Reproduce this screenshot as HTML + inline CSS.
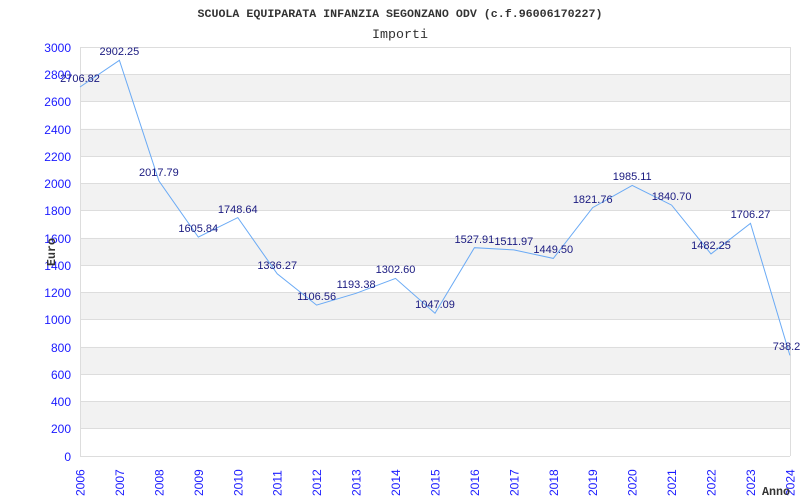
<!DOCTYPE html>
<html><head><meta charset="utf-8"><style>html,body{margin:0;padding:0;background:#fff;width:800px;height:500px;overflow:hidden}</style></head>
<body>
<svg width="800" height="500" xmlns="http://www.w3.org/2000/svg" font-family="Liberation Sans, sans-serif">
<rect width="800" height="500" fill="#fff"/>
<g fill="#f2f2f2">
<rect x="80" y="74.3" width="710" height="27.3"/>
<rect x="80" y="128.8" width="710" height="27.3"/>
<rect x="80" y="183.4" width="710" height="27.3"/>
<rect x="80" y="237.9" width="710" height="27.3"/>
<rect x="80" y="292.4" width="710" height="27.3"/>
<rect x="80" y="346.9" width="710" height="27.3"/>
<rect x="80" y="401.5" width="710" height="27.3"/>
</g>
<g stroke="#dddddd" stroke-width="1">
<line x1="80" x2="790" y1="47.5" y2="47.5"/><line x1="80" x2="790" y1="74.5" y2="74.5"/><line x1="80" x2="790" y1="101.5" y2="101.5"/><line x1="80" x2="790" y1="129.5" y2="129.5"/><line x1="80" x2="790" y1="156.5" y2="156.5"/><line x1="80" x2="790" y1="183.5" y2="183.5"/><line x1="80" x2="790" y1="210.5" y2="210.5"/><line x1="80" x2="790" y1="238.5" y2="238.5"/><line x1="80" x2="790" y1="265.5" y2="265.5"/><line x1="80" x2="790" y1="292.5" y2="292.5"/><line x1="80" x2="790" y1="319.5" y2="319.5"/><line x1="80" x2="790" y1="347.5" y2="347.5"/><line x1="80" x2="790" y1="374.5" y2="374.5"/><line x1="80" x2="790" y1="401.5" y2="401.5"/><line x1="80" x2="790" y1="428.5" y2="428.5"/><line x1="80" x2="790" y1="456.5" y2="456.5"/>
<line x1="80.5" x2="80.5" y1="47" y2="456"/><line x1="790.5" x2="790.5" y1="47" y2="456"/>
</g>
<g font-size="12" fill="#1a1aff" text-anchor="end">
<text x="71" y="52">3000</text><text x="71" y="79">2800</text><text x="71" y="106">2600</text><text x="71" y="134">2400</text><text x="71" y="161">2200</text><text x="71" y="188">2000</text><text x="71" y="215">1800</text><text x="71" y="243">1600</text><text x="71" y="270">1400</text><text x="71" y="297">1200</text><text x="71" y="324">1000</text><text x="71" y="352">800</text><text x="71" y="379">600</text><text x="71" y="406">400</text><text x="71" y="433">200</text><text x="71" y="461">0</text>
</g>
<g font-size="12" fill="#1a1aff">
<text transform="translate(84.5,496) rotate(-90)">2006</text>
<text transform="translate(123.9,496) rotate(-90)">2007</text>
<text transform="translate(163.4,496) rotate(-90)">2008</text>
<text transform="translate(202.8,496) rotate(-90)">2009</text>
<text transform="translate(242.3,496) rotate(-90)">2010</text>
<text transform="translate(281.7,496) rotate(-90)">2011</text>
<text transform="translate(321.1,496) rotate(-90)">2012</text>
<text transform="translate(360.6,496) rotate(-90)">2013</text>
<text transform="translate(400,496) rotate(-90)">2014</text>
<text transform="translate(439.5,496) rotate(-90)">2015</text>
<text transform="translate(478.9,496) rotate(-90)">2016</text>
<text transform="translate(518.3,496) rotate(-90)">2017</text>
<text transform="translate(557.8,496) rotate(-90)">2018</text>
<text transform="translate(597.2,496) rotate(-90)">2019</text>
<text transform="translate(636.7,496) rotate(-90)">2020</text>
<text transform="translate(676.1,496) rotate(-90)">2021</text>
<text transform="translate(715.5,496) rotate(-90)">2022</text>
<text transform="translate(755,496) rotate(-90)">2023</text>
<text transform="translate(794.4,496) rotate(-90)">2024</text>
</g>
<polyline fill="none" stroke="#6aaaf5" stroke-width="1" points="80,87 119.4,60.3 158.9,180.9 198.3,237.1 237.8,217.6 277.2,273.8 316.6,305.1 356.1,293.3 395.5,278.4 435,313.2 474.4,247.7 513.8,249.9 553.3,258.4 592.7,207.6 632.2,185.4 671.6,205.1 711,253.9 750.5,223.4 789.9,355.4"/>
<g font-size="11" fill="#1a1a80" text-anchor="middle">
<text x="80" y="82">2706.82</text><text x="119.4" y="55">2902.25</text><text x="158.9" y="176">2017.79</text><text x="198.3" y="232">1605.84</text><text x="237.8" y="213">1748.64</text><text x="277.2" y="269">1336.27</text><text x="316.6" y="300">1106.56</text><text x="356.1" y="288">1193.38</text><text x="395.5" y="273">1302.60</text><text x="435" y="308">1047.09</text><text x="474.4" y="243">1527.91</text><text x="513.8" y="245">1511.97</text><text x="553.3" y="253">1449.50</text><text x="592.7" y="203">1821.76</text><text x="632.2" y="180">1985.11</text><text x="671.6" y="200">1840.70</text><text x="711" y="249">1482.25</text><text x="750.5" y="218">1706.27</text><text x="786.5" y="350">738.2</text>
</g>
<g font-family="Liberation Mono, monospace" fill="#333">
<text x="400" y="17" text-anchor="middle" font-size="11" font-weight="bold" textLength="405" lengthAdjust="spacingAndGlyphs">SCUOLA EQUIPARATA INFANZIA SEGONZANO ODV (c.f.96006170227)</text>
<text x="400" y="38" text-anchor="middle" font-size="13" textLength="56" lengthAdjust="spacingAndGlyphs">Importi</text>
<text x="762" y="495" font-size="12" font-weight="bold" textLength="28" lengthAdjust="spacingAndGlyphs">Anno</text>
<text transform="translate(55,266) rotate(-90)" font-size="12" font-weight="bold" textLength="28" lengthAdjust="spacingAndGlyphs">Euro</text>
</g>
</svg>
</body></html>
